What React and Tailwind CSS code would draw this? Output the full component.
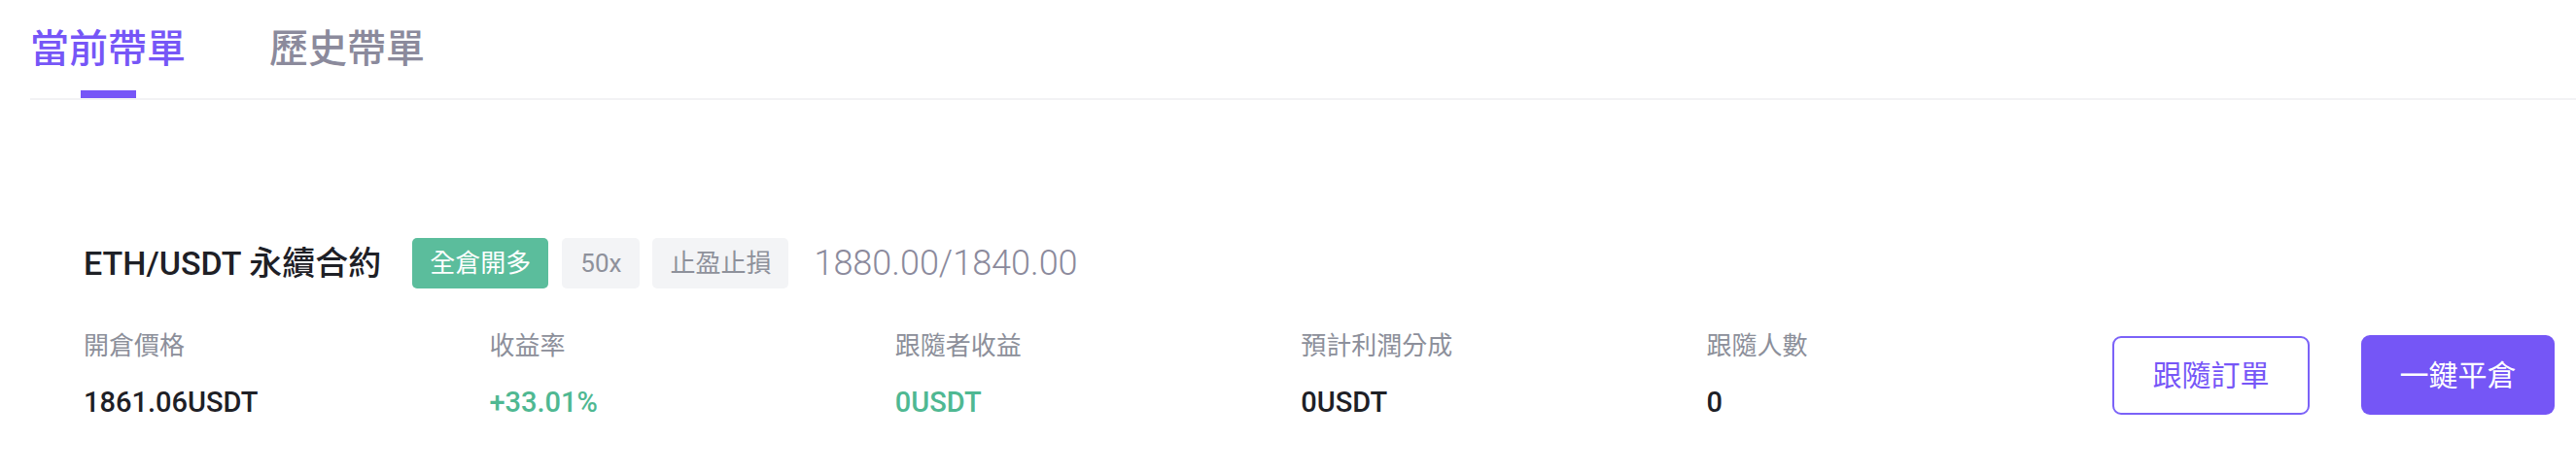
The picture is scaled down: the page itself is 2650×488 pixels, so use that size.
import React from "react";

const stats = [
  { label: "開倉價格", value: "1861.06USDT", tone: "text-[#1e2026]" },
  { label: "收益率", value: "+33.01%", tone: "text-[#4fb892]" },
  { label: "跟隨者收益", value: "0USDT", tone: "text-[#4fb892]" },
  { label: "預計利潤分成", value: "0USDT", tone: "text-[#1e2026]" },
  { label: "跟隨人數", value: "0", tone: "text-[#1e2026]" },
];

export default function App() {
  return (
    <div className="w-full h-[488px] bg-white font-['Roboto','Noto_Sans_CJK_TC',sans-serif]">
      {/* tabs */}
      <div className="ml-[31px] border-b-2 border-[#f2f2f4] flex items-end gap-[86px] h-[103px]">
        <div className="flex flex-col items-center">
          <span className="text-[40px] leading-[40px] font-medium text-[#7656f7]">當前帶單</span>
          <span className="mt-[22px] w-[57px] h-[8px] bg-[#7656f7]"></span>
        </div>
        <div className="flex flex-col items-center">
          <span className="text-[40px] leading-[40px] font-medium text-[#8b8a9c]">歷史帶單</span>
          <span className="mt-[22px] w-[57px] h-[8px] bg-transparent"></span>
        </div>
      </div>

      {/* current order */}
      <div className="mt-[142px] pl-[86px] pr-[22px]">
        <div className="flex items-center h-[52px]">
          <span className="text-[34px] font-medium text-[#1e2026]">ETH/USDT 永續合約</span>
          <span className="ml-[32px] h-[52px] px-[18px] flex items-center rounded-[5px] bg-[#5bbd9c] text-white text-[26px]">全倉開多</span>
          <span className="ml-[14px] h-[52px] px-[19px] flex items-center rounded-[5px] bg-[#f3f4f6] text-[#8e919b] text-[26px]">50x</span>
          <span className="ml-[13px] h-[52px] px-[18px] flex items-center rounded-[5px] bg-[#f3f4f6] text-[#8e919b] text-[26px]">止盈止損</span>
          <span className="ml-[26px] text-[36px] font-light text-[#8b8a9c]">1880.00/1840.00</span>
        </div>

        <div className="mt-[42px] flex items-center">
          <div className="flex-1 grid grid-cols-5">
            {stats.map((s) => (
              <div key={s.label} className="flex flex-col">
                <span className="text-[26px] leading-[34px] text-[#8c8f9a]">{s.label}</span>
                <span className={`mt-[22px] text-[29px] leading-[38px] font-medium ${s.tone}`}>{s.value}</span>
              </div>
            ))}
          </div>
          <div className="flex items-center gap-[53px]">
            <button className="w-[203px] h-[81px] rounded-[9px] border-2 border-[#7b62f8] text-[#7656f7] text-[30px]">跟隨訂單</button>
            <button className="w-[199px] h-[82px] rounded-[9px] bg-[#7556f6] text-white text-[30px]">一鍵平倉</button>
          </div>
        </div>
      </div>
    </div>
  );
}
